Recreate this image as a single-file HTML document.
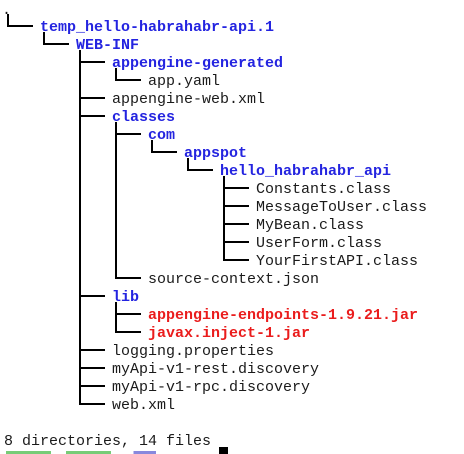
<!DOCTYPE html>
<html><head><meta charset="utf-8"><style>
html,body{margin:0;padding:0;background:#fff;width:464px;height:454px;overflow:hidden;position:relative}
.t{position:absolute;font:15px/18px "Liberation Mono","DejaVu Sans Mono",monospace;color:#1a1a1a;white-space:pre;transform:translateY(2px)}
.b{color:#2424e0;font-weight:bold}
.r{color:#ea1c1c;font-weight:bold}
.h,.v{position:absolute;background:#000}
.h{height:2px;width:26px}
.v{width:2px}
</style></head><body>
<div class="t" style="left:2px;top:0px">.</div>
<div class="t b" style="left:40px;top:17px">temp_hello-habrahabr-api.1</div>
<div class="t b" style="left:76px;top:35px">WEB-INF</div>
<div class="t b" style="left:112px;top:53px">appengine-generated</div>
<div class="t" style="left:148px;top:71px">app.yaml</div>
<div class="t" style="left:112px;top:89px">appengine-web.xml</div>
<div class="t b" style="left:112px;top:107px">classes</div>
<div class="t b" style="left:148px;top:125px">com</div>
<div class="t b" style="left:184px;top:143px">appspot</div>
<div class="t b" style="left:220px;top:161px">hello_habrahabr_api</div>
<div class="t" style="left:256px;top:179px">Constants.class</div>
<div class="t" style="left:256px;top:197px">MessageToUser.class</div>
<div class="t" style="left:256px;top:215px">MyBean.class</div>
<div class="t" style="left:256px;top:233px">UserForm.class</div>
<div class="t" style="left:256px;top:251px">YourFirstAPI.class</div>
<div class="t" style="left:148px;top:269px">source-context.json</div>
<div class="t b" style="left:112px;top:287px">lib</div>
<div class="t r" style="left:148px;top:305px">appengine-endpoints-1.9.21.jar</div>
<div class="t r" style="left:148px;top:323px">javax.inject-1.jar</div>
<div class="t" style="left:112px;top:341px">logging.properties</div>
<div class="t" style="left:112px;top:359px">myApi-v1-rest.discovery</div>
<div class="t" style="left:112px;top:377px">myApi-v1-rpc.discovery</div>
<div class="t" style="left:112px;top:395px">web.xml</div>
<div class="t" style="left:4px;top:431px">8 directories, 14 files</div>
<div style="position:absolute;left:219px;top:447px;width:9px;height:10px;background:#000"></div>
<div style="position:absolute;left:6px;top:451px;width:150px;height:3px;background:linear-gradient(90deg,#7c7 0 30%,#fff 30% 40%,#7c7 40% 70%,#fff 70% 85%,#88d 85%)"></div>

<div class="v" style="left:7px;top:14px;height:13px"></div>
<div class="h" style="left:7px;top:25px"></div>
<div class="v" style="left:43px;top:32px;height:13px"></div>
<div class="h" style="left:43px;top:43px"></div>
<div class="v" style="left:79px;top:50px;height:355px"></div>
<div class="h" style="left:79px;top:61px"></div>
<div class="h" style="left:79px;top:97px"></div>
<div class="h" style="left:79px;top:115px"></div>
<div class="h" style="left:79px;top:295px"></div>
<div class="h" style="left:79px;top:349px"></div>
<div class="h" style="left:79px;top:367px"></div>
<div class="h" style="left:79px;top:385px"></div>
<div class="h" style="left:79px;top:403px"></div>
<div class="v" style="left:115px;top:68px;height:13px"></div>
<div class="h" style="left:115px;top:79px"></div>
<div class="v" style="left:115px;top:122px;height:157px"></div>
<div class="h" style="left:115px;top:133px"></div>
<div class="h" style="left:115px;top:277px"></div>
<div class="v" style="left:151px;top:140px;height:13px"></div>
<div class="h" style="left:151px;top:151px"></div>
<div class="v" style="left:187px;top:158px;height:13px"></div>
<div class="h" style="left:187px;top:169px"></div>
<div class="v" style="left:223px;top:176px;height:85px"></div>
<div class="h" style="left:223px;top:187px"></div>
<div class="h" style="left:223px;top:205px"></div>
<div class="h" style="left:223px;top:223px"></div>
<div class="h" style="left:223px;top:241px"></div>
<div class="h" style="left:223px;top:259px"></div>
<div class="v" style="left:115px;top:302px;height:31px"></div>
<div class="h" style="left:115px;top:313px"></div>
<div class="h" style="left:115px;top:331px"></div>
</body></html>
